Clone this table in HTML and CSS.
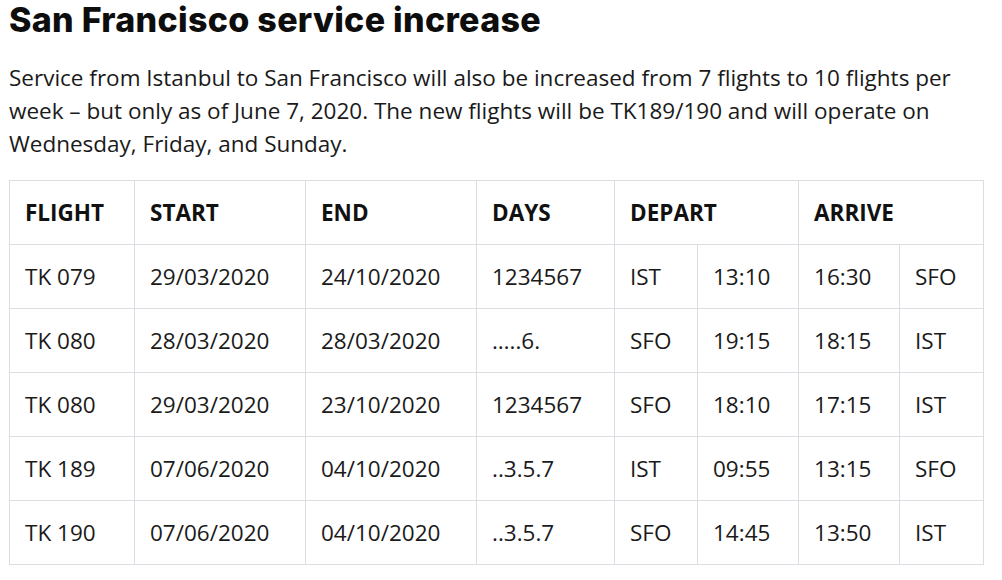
FILE: index.html
```html
<!DOCTYPE html>
<html>
<head>
<meta charset="utf-8">
<link rel="stylesheet" href="styles.css">
</head>
<body>
<article class="post">
  <h2 class="title">San Francisco service increase</h2>
  <p class="lead">Service from Istanbul to San Francisco will also be increased from 7 flights to 10 flights per week – but only as of June 7, 2020. The new flights will be TK189/190 and will operate on Wednesday, Friday, and Sunday.</p>
  <table class="sched">
    <colgroup>
      <col class="c1"><col class="c2"><col class="c3"><col class="c4"><col class="c5"><col class="c6"><col class="c7"><col class="c8">
    </colgroup>
    <thead>
      <tr><th>FLIGHT</th><th>START</th><th>END</th><th>DAYS</th><th colspan="2">DEPART</th><th colspan="2">ARRIVE</th></tr>
    </thead>
    <tbody>
      <tr><td>TK 079</td><td>29/03/2020</td><td>24/10/2020</td><td>1234567</td><td>IST</td><td>13:10</td><td>16:30</td><td>SFO</td></tr>
      <tr><td>TK 080</td><td>28/03/2020</td><td>28/03/2020</td><td>…..6.</td><td>SFO</td><td>19:15</td><td>18:15</td><td>IST</td></tr>
      <tr><td>TK 080</td><td>29/03/2020</td><td>23/10/2020</td><td>1234567</td><td>SFO</td><td>18:10</td><td>17:15</td><td>IST</td></tr>
      <tr><td>TK 189</td><td>07/06/2020</td><td>04/10/2020</td><td>..3.5.7</td><td>IST</td><td>09:55</td><td>13:15</td><td>SFO</td></tr>
      <tr><td>TK 190</td><td>07/06/2020</td><td>04/10/2020</td><td>..3.5.7</td><td>SFO</td><td>14:45</td><td>13:50</td><td>IST</td></tr>
    </tbody>
  </table>
</article>
</body>
</html>
```

FILE: styles.css
```css
html, body {
  margin: 0;
  padding: 0;
  background: #fff;
}
body {
  color: #1a1a1a;
  font-family: "Open Sans", "Noto Sans", sans-serif;
}
.post {
  padding: 0 0 0 9px;
  width: 975px;
}
.title {
  font-family: "Inter", "Liberation Sans", sans-serif;
  font-weight: 800;
  font-size: 34px;
  line-height: 40px;
  margin: 0 0 21px 0;
  color: #0d0d0d;
  letter-spacing: 0.3px;
}
.lead {
  font-size: 22.5px;
  line-height: 33px;
  margin: 0 0 20px 0;
  color: #1a1a1a;
}
.sched {
  border-collapse: collapse;
  table-layout: fixed;
  width: 975px;
  font-size: 22.5px;
}
.c1 { width: 125px; }
.c2 { width: 171px; }
.c3 { width: 171px; }
.c4 { width: 138px; }
.c5 { width: 83px; }
.c6 { width: 101px; }
.c7 { width: 101px; }
.c8 { width: 84px; }
.sched th, .sched td {
  border: 1px solid #dcdde2;
  height: 64px;
  padding: 0 0 0 15px;
  text-align: left;
  vertical-align: middle;
  white-space: nowrap;
  box-sizing: border-box;
}
.sched th {
  font-weight: 700;
  color: #111;
}
.sched td {
  font-weight: 400;
  color: #1a1a1a;
}
```
